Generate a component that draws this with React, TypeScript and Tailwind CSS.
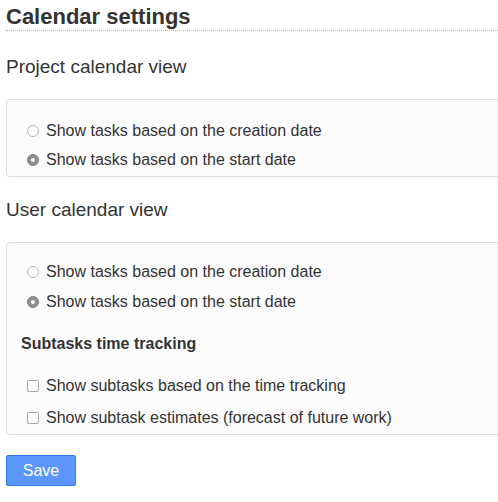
// Calendar settings form

function Radio({ checked }: { checked?: boolean }) {
  return checked ? (
    <span className="w-[12px] h-[12px] rounded-full bg-[#8e8e8e] border border-[#858585] flex items-center justify-center shrink-0">
      <span className="w-[4px] h-[4px] rounded-full bg-white" />
    </span>
  ) : (
    <span className="w-[12px] h-[12px] rounded-full bg-white border border-[#b5b5b5] shrink-0" />
  );
}

function Checkbox() {
  return <span className="w-[12px] h-[12px] rounded-[2px] bg-white border border-[#a9a9a9] shrink-0" />;
}

function Option({ label, checked, box }: { label: string; checked?: boolean; box?: boolean }) {
  return (
    <label className="flex items-center gap-[7px] pl-[7px] h-[20px]">
      {box ? <Checkbox /> : <Radio checked={checked} />}
      <span>{label}</span>
    </label>
  );
}

export default function App() {
  return (
    <div className="w-[498px] h-[502px] overflow-hidden bg-white font-['Liberation_Sans',Arial,sans-serif] text-[#333]">
      <div className="w-[560px] pl-[6px]">
        <h2 className="pt-[4px] text-[22px] leading-[26px] font-bold border-b border-dotted border-[#bbb]">
          Calendar settings
        </h2>

        <h3 className="mt-[25px] text-[19px] leading-[22px]">Project calendar view</h3>
        <div className="mt-[21px] border border-[#ddd] rounded-[4px] bg-[#fcfcfc] pl-[13px] pt-[21px] pb-[6px] flex flex-col gap-[9px] text-[16px]">
          <Option label="Show tasks based on the creation date" />
          <Option label="Show tasks based on the start date" checked />
        </div>

        <h3 className="mt-[22px] text-[19px] leading-[22px]">User calendar view</h3>
        <div className="mt-[21px] border border-[#ddd] rounded-[4px] bg-[#fcfcfc] pl-[13px] pt-[19px] pb-[6px] flex flex-col text-[16px]">
          <div className="flex flex-col gap-[10px]">
            <Option label="Show tasks based on the creation date" />
            <Option label="Show tasks based on the start date" checked />
          </div>
          <h4 className="mt-[22px] pl-[1px] font-bold leading-[20px]">Subtasks time tracking</h4>
          <div className="mt-[22px] flex flex-col gap-[12px]">
            <Option label="Show subtasks based on the time tracking" box />
            <Option label="Show subtask estimates (forecast of future work)" box />
          </div>
        </div>

        <button className="mt-[20px] w-[70px] h-[31px] rounded-[2px] border border-[#3079ed] bg-[#5b97fb] text-white text-[16px]">
          Save
        </button>
      </div>
    </div>
  );
}
